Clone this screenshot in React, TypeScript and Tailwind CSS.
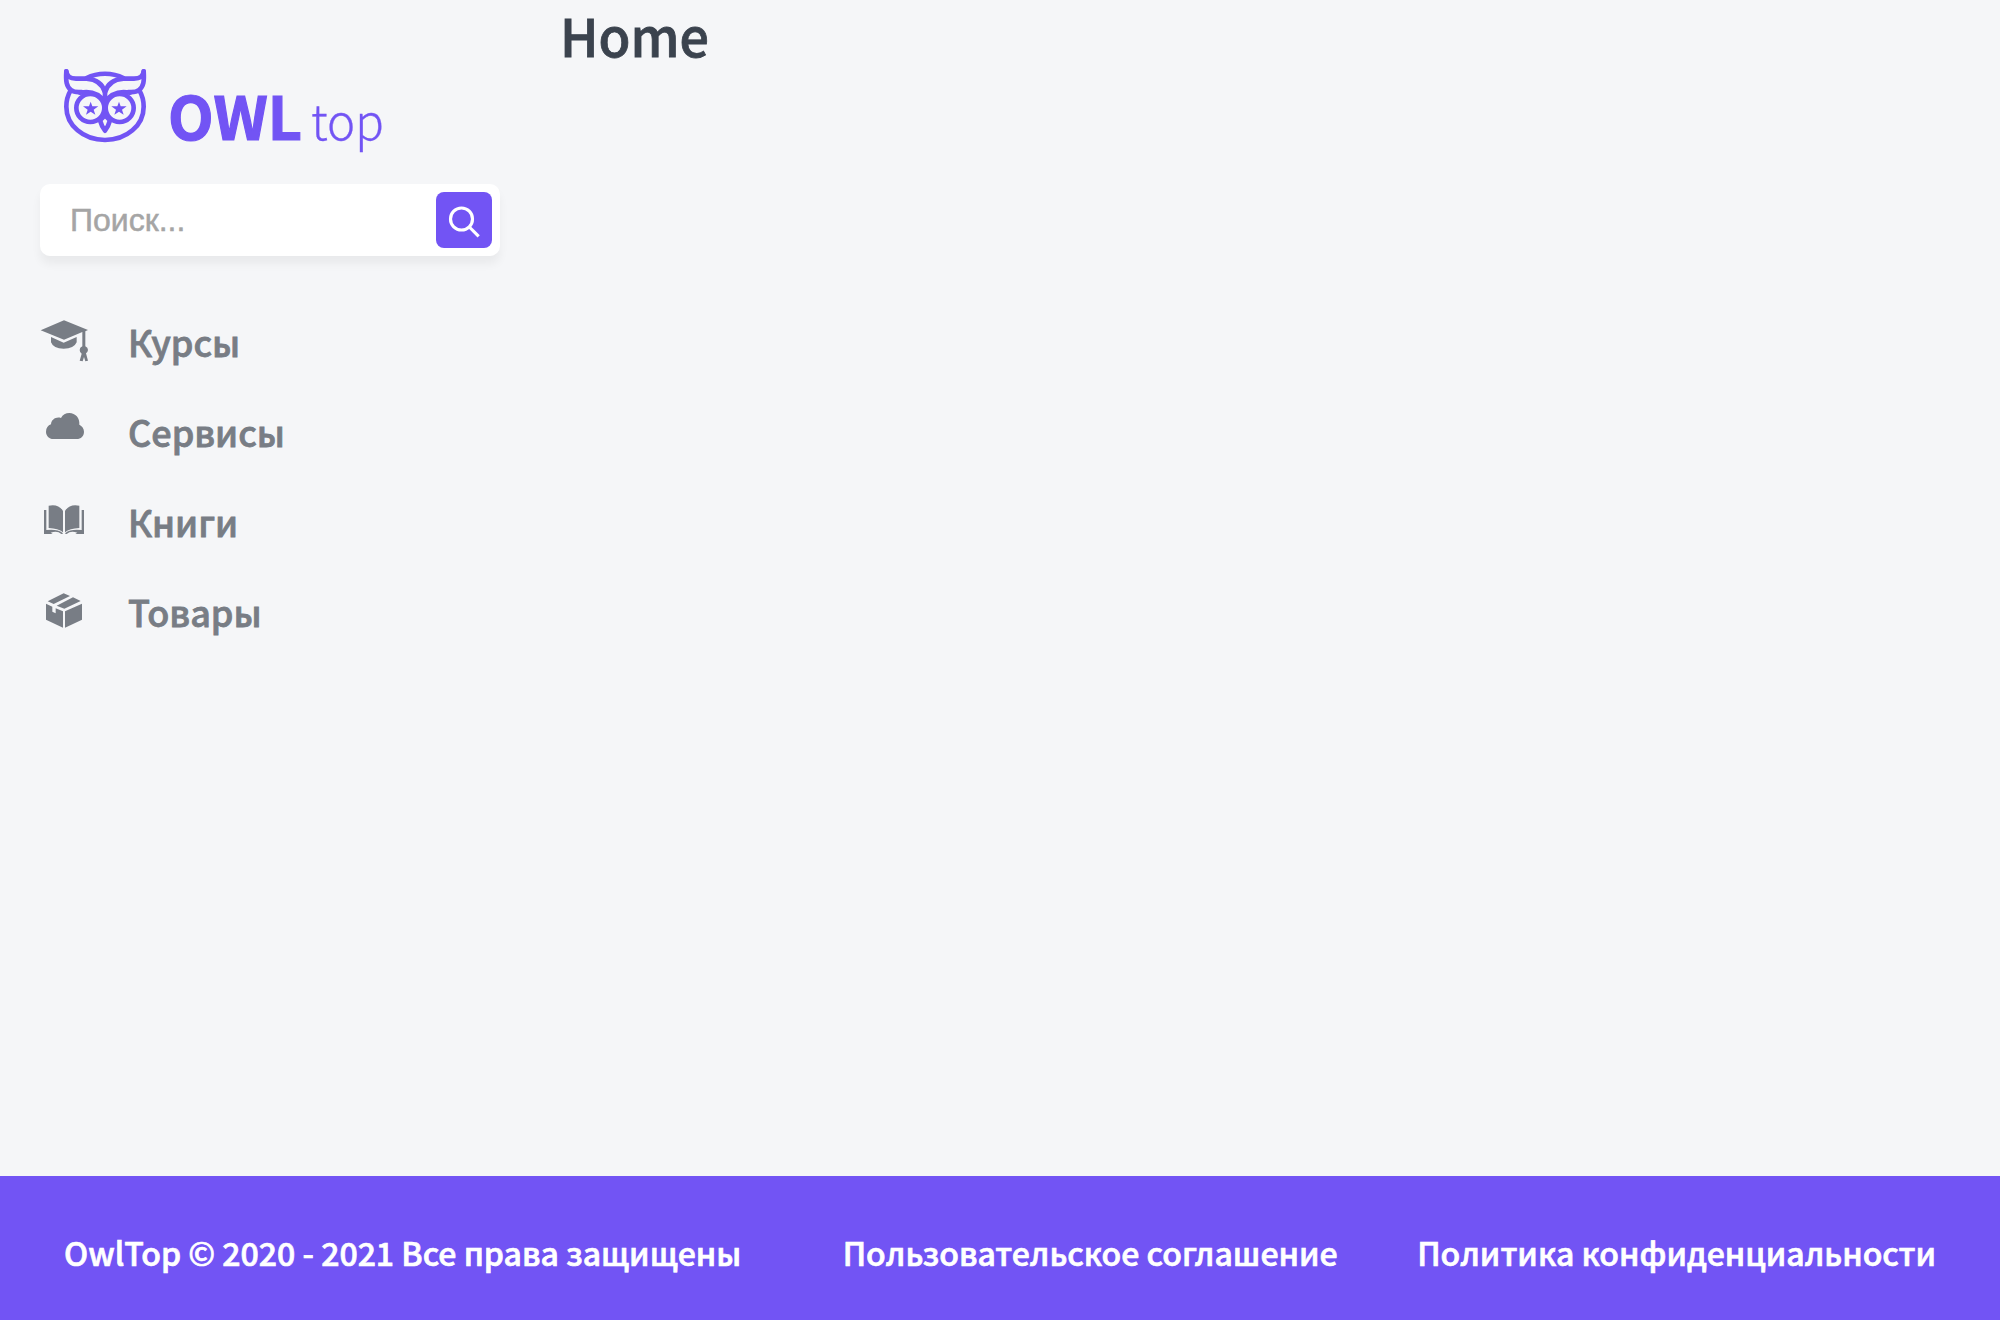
import React from "react";

const SANS = "font-['Noto_Sans_CJK_KR','Noto_Sans',sans-serif]";

function Star({ cx, cy }: { cx: number; cy: number }) {
  return (
    <path
      transform={`translate(${cx} ${cy})`}
      d="M0-20 5-6H23L9 4 14 19 0 10-14 19-9 4-23-6H-5Z"
      fill="currentColor"
      stroke="none"
    />
  );
}

function Owl() {
  return (
    <svg viewBox="30 30 270 240" className="h-20 w-[90px] shrink-0" fill="none" stroke="currentColor" strokeWidth="14" strokeLinecap="round" strokeLinejoin="round">
      <path d="M62 106C53 121 49 137 49 155C49 211 100 255 165 255S281 211 281 155C281 137 277 121 268 106" />
      <path d="M49 49C47 78 49 94 63 105C69 110 82 112 95 111" />
      <path d="M281 49C283 78 281 94 267 105C261 110 248 112 235 111" />
      <path d="M49 49C51 65 60 71 78 71H110C138 73 158 88 165 112C172 88 192 73 220 71H252C270 71 279 65 281 49" />
      <path d="M110 69C142 52 188 52 220 69" />
      <path d="M90 113C120 107 148 116 165 142C182 116 210 107 240 113" />
      <path d="M165 108V142" />
      <circle cx="121" cy="159" r="42" />
      <circle cx="209" cy="159" r="42" />
      <path d="M165 181 150 196Q155 214 165 227Q175 214 180 196Z" />
      <Star cx={122} cy={160} />
      <Star cx={207} cy={160} />
    </svg>
  );
}

function Logo() {
  return (
    <div className="flex h-[119px] items-start pt-[65px] pl-[20px] text-[#7254f4]">
      <Owl />
      <svg viewBox="0 0 240 100" className="h-[100px] w-[240px] shrink-0 overflow-visible" fill="currentColor" stroke="currentColor">
        <text x="18" y="75" textLength="134" strokeWidth="1.2" lengthAdjust="spacingAndGlyphs" className="font-['Noto_Sans_CJK_KR',sans-serif] text-[60px] font-bold">OWL</text>
        <text x="161" y="75" textLength="73" strokeWidth="0.3" lengthAdjust="spacingAndGlyphs" className="font-['Noto_Sans_CJK_KR',sans-serif] text-[49px] font-light">top</text>
      </svg>
    </div>
  );
}

function Search() {
  return (
    <div className="mt-[65px] flex h-[72px] w-[460px] items-center justify-between rounded-[10px] bg-white pr-2 pl-[30px] shadow-[0_8px_10px_rgba(0,0,0,0.05)]">
      <span className="font-['Liberation_Sans',sans-serif] text-[32px] leading-9 text-[#a5a5a5] [-webkit-text-stroke:0.5px_#a5a5a5]">Поиск...</span>
      <button className="size-14 rounded-[8px] bg-[#7254f4]" aria-label="Поиск">
        <svg viewBox="1248 66 168 168" className="size-14" fill="none" stroke="white" strokeWidth="9.5">
          <circle cx="1324.500" cy="147" r="33" />
          <path d="M1348 171 1376 199" />
        </svg>
      </button>
    </div>
  );
}

const HatIcon = (
  <svg viewBox="30 39 150 135" className="mt-[3px] h-[45px] w-[50px]" fill="currentColor">
    <path d="M32 76 102 46 174 75 166 79V124Q174 128 174 135 173 142 168 145L174 167 166 169 162 156 158 169 149 167 155 146Q149 142 149 135 149 128 157 124V81L102 104Z" />
    <path d="M63 96 101 113 140 96V112Q132 131 101 131T63 112Z" />
  </svg>
);
const CloudIcon = (
  <svg viewBox="30 309 150 105" className="mt-[3px] h-[35px] w-[50px]" fill="currentColor">
    <path d="M70 402C57 402 48 392 48 380 48 369 54 361 63 358 64 343 79 334 93 339 98 329 107 324 118 324 136 324 150 339 148 359 156 363 162 370 162 380 162 393 153 402 140 402Z" />
  </svg>
);
const BookIcon = (
  <svg viewBox="30 30 150 120" className="mt-[5px] h-10 w-[50px]" fill="currentColor">
    <path d="M56 47Q86 41 99 63V127Q85 115 56 114ZM148 47Q118 41 105 63V127Q119 115 148 114Z" />
    <path d="M42 60H49V120Q82 116 98 129V132H94Q82 121 62 128L68 132H42ZM162 60H155V120Q122 116 106 129V132H110Q122 121 142 128L136 132H162Z" />
  </svg>
);
const BoxIcon = (
  <svg viewBox="30 300 150 120" className="mt-[5px] h-10 w-[50px]" fill="currentColor">
    <path d="M53 334 101 310 120 318 71 342ZM80 347 129 322 152 333 103 356Z" />
    <path d="M48 341 67 350V365L77 370V355L99 364V413L48 389ZM156 341V389L105 413V364Z" />
  </svg>
);

const MENU = [
  { label: "Курсы", icon: HatIcon },
  { label: "Сервисы", icon: CloudIcon },
  { label: "Книги", icon: BookIcon },
  { label: "Товары", icon: BoxIcon },
];

export default function App() {
  return (
    <div className={`flex h-[1320px] w-[2000px] flex-col bg-[#f5f6f8] ${SANS}`}>
      <div className="flex flex-1">
        <aside className="w-[560px] shrink-0 pl-10">
          <Logo />
          <Search />
          <nav className="mt-[59px]">
            {MENU.map(({ label, icon }) => (
              <a key={label} className="flex h-[90px] items-start text-[#787d85]">
                {icon}
                <span className="ml-[38px] text-[36px] leading-[52px] font-medium [-webkit-text-stroke:0.8px_#787d85]">{label}</span>
              </a>
            ))}
          </nav>
        </aside>
        <main>
          <h1 className="text-[52px] leading-[75px] -mt-[3px] font-medium text-[#3b434e] [-webkit-text-stroke:0.8px_#3b434e]">Home</h1>
        </main>
      </div>
      <footer className="flex h-36 items-center bg-[#7254f4] px-16 pt-2 text-[32px] leading-[48px] font-medium whitespace-nowrap text-white [-webkit-text-stroke:0.7px_white]">
        <div className="flex-1">OwlTop © 2020 - 2021 Все права защищены</div>
        <a>Пользовательское соглашение</a>
        <a className="ml-[79.500px]">Политика конфиденциальности</a>
      </footer>
    </div>
  );
}
